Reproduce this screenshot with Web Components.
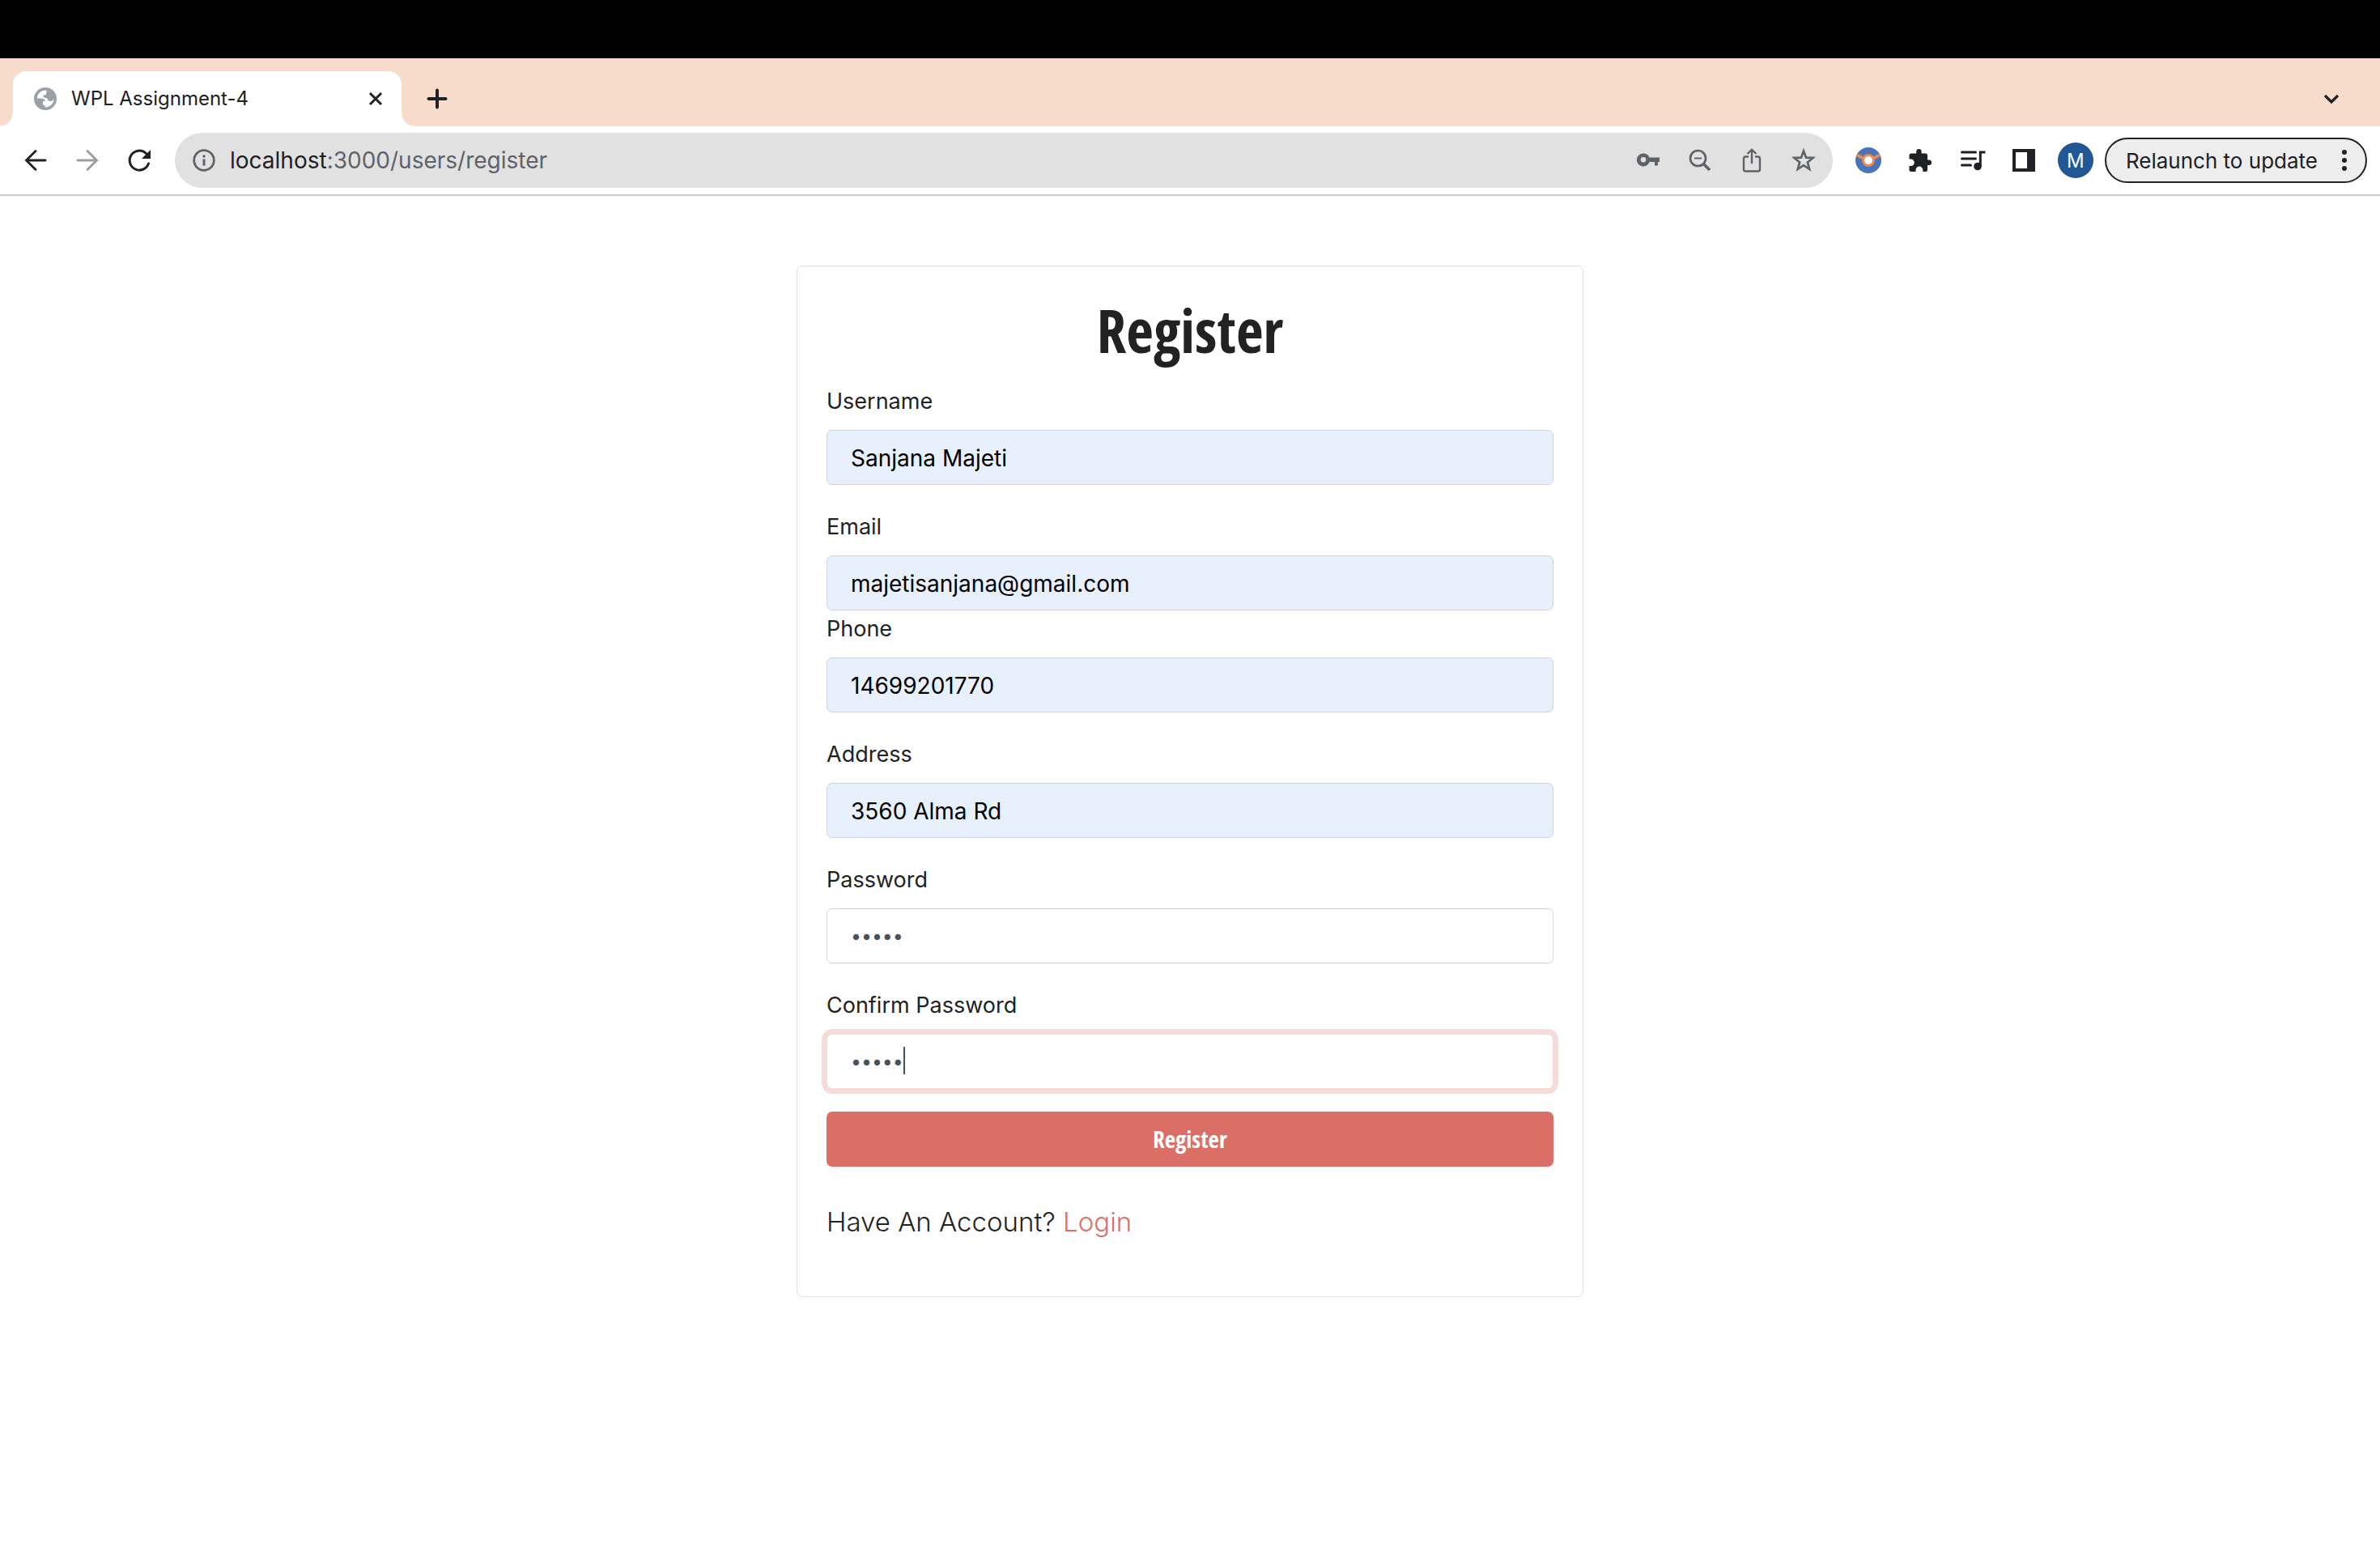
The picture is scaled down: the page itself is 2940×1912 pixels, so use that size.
<!DOCTYPE html>
<html lang="en">
<head>
<meta charset="utf-8">
<title>WPL Assignment-4</title>
<style>
  body { margin: 0; background: #fff; color: #202124; font-family: Inter, "Liberation Sans", sans-serif; }
</style>
</head>
<body>
<browser-window>
  <browser-tab slot="tabs">WPL Assignment-4</browser-tab>
  <browser-toolbar slot="toolbar"></browser-toolbar>
  <register-card heading="Register">
    <form-field label="Username" value="Sanjana Majeti" autofilled></form-field>
    <form-field label="Email" type="email" value="majetisanjana@gmail.com" autofilled tight></form-field>
    <form-field label="Phone" type="tel" value="14699201770" autofilled></form-field>
    <form-field label="Address" value="3560 Alma Rd" autofilled></form-field>
    <form-field label="Password" type="password" value="abcde"></form-field>
    <form-field label="Confirm Password" type="password" value="abcde" active></form-field>
  </register-card>
</browser-window>

<script>
const ICONS = {
  globe: '<circle cx="14" cy="14" r="14" fill="#9aa0a6"/><path d="M15.500 3.500C8.500 3.200 3.800 8 3.800 13.500H9Q13.500 13.500 13.800 17H11V21.500L13.500 22V24.500C20 24.500 24.500 20 24.500 14.500Q23 17 20 17Q17 17 16.500 13.500L11.500 12V9.500H13.500Q15.500 9 15.500 6Z" fill="#fff"/>',
  close: '<path d="M7 7L21 21M21 7L7 21" stroke="currentColor" stroke-width="3"/>',
  plus: '<path d="M14 3.500V24.500M3.500 14H24.500" stroke="currentColor" stroke-width="4" stroke-linecap="round"/>',
  chevron: '<path d="M6 10L14 18L22 10" stroke="currentColor" stroke-width="3.200" fill="none"/>',
  back: '<path d="M26 14H3M14 2.500L2.500 14L14 25.500" stroke="currentColor" stroke-width="2.800" fill="none" stroke-linecap="round"/>',
  forward: '<path d="M2 14H25M14 2.500L25.500 14L14 25.500" stroke="currentColor" stroke-width="2.800" fill="none" stroke-linecap="round"/>',
  reload: '<path d="M25.500 18A12 12 0 1 1 22.500 5.500" stroke="currentColor" stroke-width="3" fill="none" stroke-linecap="round"/><path d="M28 1V12H17Z" fill="currentColor"/>',
  info: '<circle cx="14" cy="14" r="12.300" stroke="currentColor" stroke-width="2.800" fill="none"/><path d="M12.500 7.500H15.500V10.500H12.500ZM12.500 12.500H15.500V20.500H12.500Z" fill="currentColor"/>',
  key: '<path fill-rule="evenodd" d="M8 5.500A8 8 0 1 0 15.500 16H22V20.500H26V16H28V10.500H15.500A8 8 0 0 0 8 5.500ZM8 10A3.300 3.300 0 1 1 8 16.600A3.300 3.300 0 0 1 8 10Z" fill="currentColor"/>',
  zoom: '<circle cx="11.500" cy="11.500" r="9.500" stroke="currentColor" stroke-width="2.700" fill="none"/><path d="M7 11.500H16" stroke="currentColor" stroke-width="2"/><path d="M18.500 18.500L26 26" stroke="currentColor" stroke-width="3.800"/>',
  share: '<path d="M10 9.500H6.500Q4 9.500 4 12V25Q4 27.500 6.500 27.500H21.500Q24 27.500 24 25V12Q24 9.500 21.500 9.500H18M14 18V1M8.500 6L14 .800L19.500 6" stroke="currentColor" stroke-width="2.400" fill="none"/>',
  star: '<path d="M14 2.500L17 10.600L25.500 11L18.900 16.400L21.200 25L14 20.200L6.800 25L9.100 16.400L2.500 11L11 10.600Z" stroke="currentColor" stroke-width="2.700" fill="none"/>',
  ball: '<circle cx="14" cy="14" r="14" fill="#4a73b8"/><path d="M1.500 8L9 12M26.500 8L19 12" stroke="#e98b52" stroke-width="3.500"/><circle cx="14" cy="14" r="5.700" fill="#fff" stroke="#e98b52" stroke-width="2.600"/>',
  puzzle: '<path d="M8.500 5.500H9.200V3.300A3.200 3.200 0 0 1 15.600 3.300V5.500H20.500Q23 5.500 23 8V13.500H24.800A3.200 3.200 0 0 1 24.800 19.900H23V25.500Q23 28 20.500 28H17.300V26A3.400 3.400 0 0 0 8.500 26V28H3Q.500 28 .500 25.500V21H2.500A3.400 3.400 0 0 0 2.500 12.500H.500V8Q.500 5.500 3 5.500Z" fill="currentColor"/>',
  music: '<path d="M1.500 4H18.500M1.500 12H18.500M1.500 20H12.500" stroke="currentColor" stroke-width="3" stroke-linecap="round"/><circle cx="21" cy="21.500" r="4.800" fill="currentColor"/><path d="M24.300 22V4H30.500" stroke="currentColor" stroke-width="3" fill="none"/>',
  panel: '<path fill-rule="evenodd" d="M0 0H28V28H0ZM4 4V24H18V4Z" fill="currentColor"/>',
  dots: '<circle cx="14" cy="4" r="3" fill="currentColor"/><circle cx="14" cy="14" r="3" fill="currentColor"/><circle cx="14" cy="24" r="3" fill="currentColor"/>'
};

class BaseElement extends HTMLElement {
  connectedCallback() {
    if (this.shadowRoot) return;
    this.attachShadow({ mode: 'open' }).innerHTML =
      '<style>*{box-sizing:border-box}button{font:inherit;color:inherit;border:0;background:none;padding:0;margin:0;display:flex;align-items:center;justify-content:center}</style>' + this.render();
  }
}

class UiIcon extends BaseElement {
  render() {
    return `<style>:host{display:inline-flex;flex:none;width:var(--icon-size,28px);height:var(--icon-size,28px)}svg{width:100%;height:100%;overflow:visible}</style>
      <svg viewBox="0 0 28 28" fill="none" aria-hidden="true">${ICONS[this.getAttribute('name')]}</svg>`;
  }
}

class BrowserWindow extends BaseElement {
  render() {
    return `<style>
      :host{display:flex;flex-direction:column;min-height:100vh}
      .notch{height:72px;background:#000}
      .strip{display:flex;align-items:flex-end;height:84px;padding:0 16px;background:#f7dccb}
      .strip button{height:68px;width:56px}
      .new{margin-left:16px}
      .search{margin-left:auto;margin-right:16px}
      main{display:flex;justify-content:center;padding:86px 24px}
    </style>
    <div class="notch"></div>
    <div class="strip"><slot name="tabs"></slot>
      <button class="new" aria-label="New tab"><ui-icon name="plus"></ui-icon></button>
      <button class="search" aria-label="Search tabs"><ui-icon name="chevron"></ui-icon></button>
    </div>
    <slot name="toolbar"></slot>
    <main><slot></slot></main>`;
  }
}

class BrowserTab extends BaseElement {
  render() {
    return `<style>
      :host{display:flex;align-items:center;position:relative;box-sizing:border-box;width:480px;height:68px;padding:0 18px 0 26px;gap:18px;background:#fff;border-radius:16px 16px 0 0;font-size:24px;line-height:32px}
      :host::before,:host::after{content:"";position:absolute;bottom:0;width:16px;height:16px}
      :host::before{right:100%;background:radial-gradient(circle at 0 0,transparent 15px,#fff 16px)}
      :host::after{left:100%;background:radial-gradient(circle at 100% 0,transparent 15px,#fff 16px)}
      span{flex:1}
    </style>
    <ui-icon name="globe"></ui-icon><span><slot></slot></span>
    <button aria-label="Close tab"><ui-icon name="close"></ui-icon></button>`;
  }
}

class BrowserToolbar extends BaseElement {
  render() {
    const button = (name, label, cls = '') => `<button class="${cls}" aria-label="${label}"><ui-icon name="${name}"></ui-icon></button>`;
    return `<style>
      :host{display:flex;align-items:center;box-sizing:border-box;height:86px;padding:0 16px 0 12px;border-bottom:2px solid #cacaca}
      button{width:64px;height:64px;flex:none}
      .off{color:#9d9d9d}
      .address{display:flex;flex:1;align-items:center;height:68px;margin:0 12px;padding:0 4px;border-radius:34px;background:#e1e1e1;color:#5f6368}
      .url{flex:1;font-size:28px;line-height:36px}
      .url b{font-weight:400;color:#202124}
      .ball{--icon-size:32px}
      .avatar span{display:flex;align-items:center;justify-content:center;width:44px;height:44px;border-radius:50%;background:#225796;color:#fff;font-size:24px}
      .update{width:auto;height:56px;margin-left:4px;padding:0 12px 0 24px;gap:19px;border:2px solid #202124;border-radius:28px;background:#ededed;font-size:26px}
    </style>
    ${button('back', 'Back')}${button('forward', 'Forward', 'off')}${button('reload', 'Reload')}
    <div class="address">
      ${button('info', 'Site information')}
      <div class="url" role="textbox" contenteditable="true" spellcheck="false" aria-label="Address"><b>localhost</b>:3000/users/register</div>
      ${button('key', 'Passwords')}${button('zoom', 'Zoom')}${button('share', 'Share')}${button('star', 'Bookmark')}
    </div>
    ${button('ball', 'Extension', 'ball')}${button('puzzle', 'Extensions')}${button('music', 'Media')}${button('panel', 'Side panel')}
    <button class="avatar" aria-label="Profile"><span>M</span></button>
    <button class="update">Relaunch to update<ui-icon name="dots"></ui-icon></button>`;
  }
}

class RegisterCard extends BaseElement {
  render() {
    const heading = this.getAttribute('heading');
    return `<style>
      :host{display:block;box-sizing:border-box;width:100%;max-width:972px;padding:36px 36px 65px;border:1px solid #dfdfdf;border-radius:7px;color:#222}
      h1{margin:0 0 22px;text-align:center;font:700 73px/86px "Open Sans Condensed","Open Sans",sans-serif}
      form{display:flex;flex-direction:column}
      .submit{height:68px;border-radius:7px;background:#db6f67;color:#fff;font:700 29px/44px "Open Sans Condensed","Open Sans",sans-serif}
      p{margin:41px 0 0;font-size:33px;line-height:54px;font-weight:300}
      a{color:#db6f67;text-decoration:none}
    </style>
    <h1>${heading}</h1>
    <form><slot></slot><button class="submit" type="button">${heading}</button></form>
    <p>Have An Account? <a href="#login">Login</a></p>`;
  }
}

class FormField extends BaseElement {
  render() {
    const active = this.hasAttribute('active');
    return `<style>
      :host{display:block;margin-bottom:29px}
      :host([tight]){margin-bottom:0}
      :host([active]){margin-bottom:28px}
      label{display:block;margin-bottom:12px;font-size:27px;line-height:46px}
      .box{position:relative;display:flex}
      input{width:100%;height:68px;margin:0;padding:2px 29px 0;border:1px solid #ced4da;border-radius:7px;background:#fff;color:#495057;font:28px/44px Inter,"Liberation Sans",sans-serif;outline:0}
      input[type=password]{padding-top:0;font-size:23px}
      :host([autofilled]) input{background:#e8effd;color:#000}
      :host([active]) input{border-color:#f7dbd9;box-shadow:0 0 0 6px #f7dbd9}
      .caret{position:absolute;left:95px;top:16px;width:2px;height:34px;background:#495057}
    </style>
    <label for="control">${this.getAttribute('label')}</label>
    <div class="box"><input id="control" type="${this.getAttribute('type') || 'text'}" value="${this.getAttribute('value')}">${active ? '<span class="caret"></span>' : ''}</div>`;
  }
}

customElements.define('ui-icon', UiIcon);
customElements.define('browser-window', BrowserWindow);
customElements.define('browser-tab', BrowserTab);
customElements.define('browser-toolbar', BrowserToolbar);
customElements.define('register-card', RegisterCard);
customElements.define('form-field', FormField);
</script>
</body>
</html>
